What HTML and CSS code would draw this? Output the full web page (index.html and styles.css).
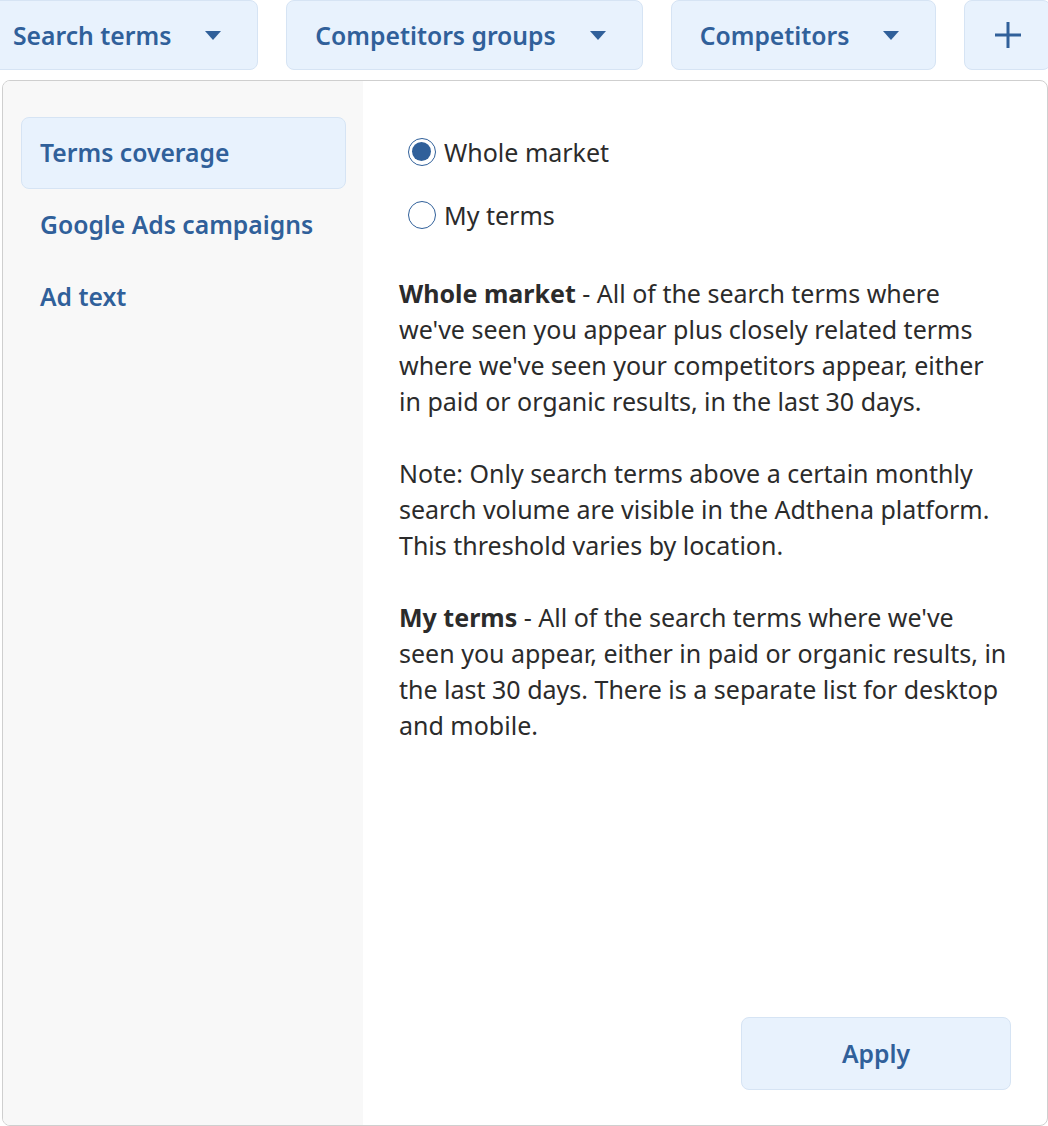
FILE: index.html
```html
<!DOCTYPE html>
<html lang="en">
<head>
    <meta charset="UTF-8">
    <meta name="viewport" content="width=device-width, initial-scale=1.0">
    <title>Terms coverage</title>
    <link rel="stylesheet" href="styles.css">
</head>
<body>

    <div class="toolbar">
        <button class="filter first">
            <span>Search terms</span>
            <span class="caret"></span>
        </button>
        <button class="filter">
            <span>Competitors groups</span>
            <span class="caret"></span>
        </button>
        <button class="filter">
            <span>Competitors</span>
            <span class="caret"></span>
        </button>
        <button class="add">
            <svg width="30" height="30" viewBox="0 0 30 30">
                <path d="M15 2 V28 M2 15 H28" stroke="#30609a" stroke-width="3" fill="none"/>
            </svg>
        </button>
    </div>

    <div class="panel">
        <div class="sidebar">
            <a class="nav-item active">Terms coverage</a>
            <a class="nav-item">Google Ads campaigns</a>
            <a class="nav-item">Ad text</a>
        </div>

        <div class="content">
            <div class="radios">
                <label class="radio">
                    <span class="dot checked"></span>
                    <span>Whole market</span>
                </label>
                <label class="radio">
                    <span class="dot"></span>
                    <span>My terms</span>
                </label>
            </div>

            <p><strong>Whole market</strong> - All of the search terms where we've seen you appear plus closely related terms where we've seen your competitors appear, either in paid or organic results, in the last 30 days.</p>
            <p>Note: Only search terms above a certain monthly search volume are visible in the Adthena platform. This threshold varies by location.</p>
            <p><strong>My terms</strong> - All of the search terms where we've seen you appear, either in paid or organic results, in the last 30 days. There is a separate list for desktop and mobile.</p>

            <div class="actions">
                <button class="apply">Apply</button>
            </div>
        </div>
    </div>

</body>
</html>
```

FILE: styles.css
```css
body {
    margin: 0;
    padding: 0;
    font-family: 'Noto Sans', 'Open Sans', sans-serif;
    background: #fff;
    color: #2b2b2b;
    overflow: hidden;
}

.toolbar {
    display: flex;
    gap: 28px;
    height: 70px;
    margin-bottom: 10px;
}

button {
    font-family: inherit;
    cursor: pointer;
}

.filter, .add {
    flex-shrink: 0;
    height: 70px;
    background: #e8f2fd;
    border: 1px solid #d6e4f4;
    border-radius: 8px;
    color: #30609a;
    font-size: 24.7px;
    font-weight: 600;
    white-space: nowrap;
    display: flex;
    align-items: center;
}

.filter {
    padding: 0 36px 0 28px;
    gap: 34px;
}

.filter.first {
    margin-left: -16px;
}

.caret {
    width: 0;
    height: 0;
    border-left: 8px solid transparent;
    border-right: 8px solid transparent;
    border-top: 9px solid #30609a;
}

.add {
    width: 87px;
    justify-content: center;
    padding: 0;
}

.panel {
    margin-left: 2px;
    width: 1046px;
    height: 1046px;
    box-sizing: border-box;
    border: 1px solid #cfcfcf;
    border-radius: 8px;
    overflow: hidden;
    display: flex;
    background: #fff;
}

.sidebar {
    width: 360px;
    flex-shrink: 0;
    background: #f8f8f8;
    padding: 36px 17px 0 18px;
    box-sizing: border-box;
    display: flex;
    flex-direction: column;
}

.nav-item {
    display: block;
    height: 72px;
    line-height: 70px;
    padding: 0 18px;
    box-sizing: border-box;
    border: 1px solid transparent;
    border-radius: 8px;
    color: #30609a;
    font-size: 24.7px;
    font-weight: 600;
}

.nav-item.active {
    background: #e8f2fd;
    border-color: #d6e4f4;
}

.content {
    flex: 1;
    padding: 39px 36px 35px 36px;
    display: flex;
    flex-direction: column;
}

.radios {
    display: flex;
    flex-direction: column;
    margin-bottom: 29px;
}

.radio {
    height: 63px;
    display: flex;
    align-items: center;
    gap: 8px;
    padding-left: 9px;
    font-size: 25px;
}

.dot {
    width: 28px;
    height: 28px;
    box-sizing: border-box;
    border: 1.5px solid #30609a;
    border-radius: 50%;
    background: #fff;
    position: relative;
}

.dot.checked::after {
    content: "";
    position: absolute;
    left: 3px;
    top: 3px;
    width: 19px;
    height: 19px;
    border-radius: 50%;
    background: #30609a;
}

p {
    margin: 0 0 36px;
    font-size: 25px;
    line-height: 36px;
}

strong {
    font-weight: 700;
}

.actions {
    margin-top: auto;
    display: flex;
    justify-content: flex-end;
}

.apply {
    width: 270px;
    height: 73px;
    background: #e8f2fd;
    border: 1px solid #d6e4f4;
    border-radius: 8px;
    color: #30609a;
    font-size: 24.7px;
    font-weight: 600;
}
```
